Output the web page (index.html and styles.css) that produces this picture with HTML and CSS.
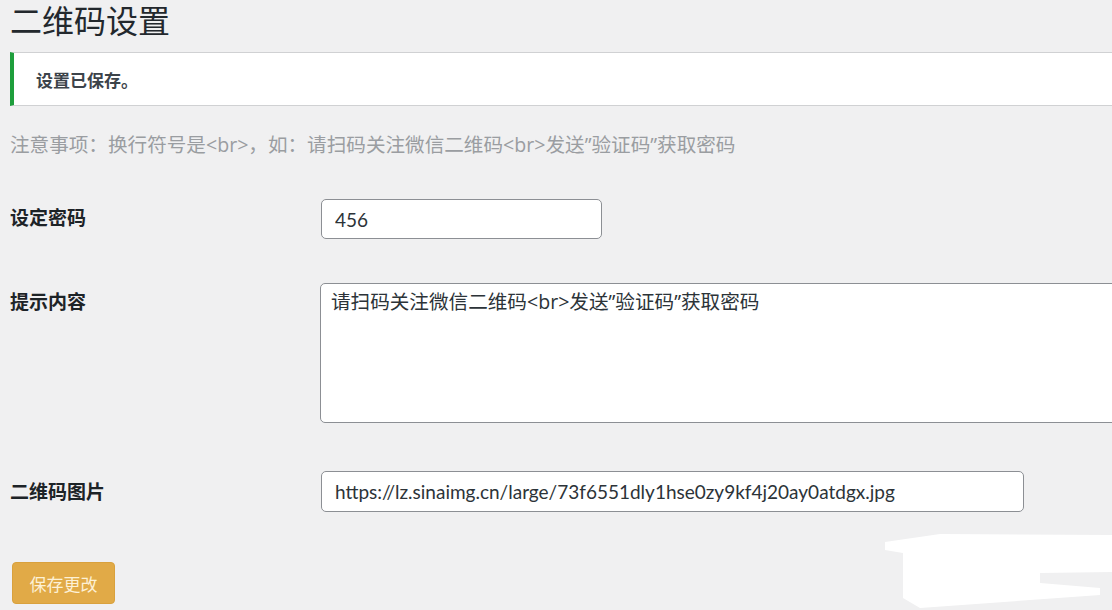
FILE: index.html
```html
<!DOCTYPE html>
<html lang="zh-CN">
<head>
<meta charset="utf-8">
<title>二维码设置</title>
<link rel="stylesheet" href="styles.css">
</head>
<body>
<div class="page">
  <h1 class="title">二维码设置</h1>
  <div class="notice"><p>设置已保存。</p></div>
  <p class="note">注意事项：换行符号是&lt;br&gt;，如：请扫码关注微信二维码&lt;br&gt;发送”验证码”获取密码</p>
  <form class="form">
    <div class="row row-pass">
      <label class="label" for="pass">设定密码</label>
      <div class="field"><input id="pass" class="input input-short" type="text" value="456"></div>
    </div>
    <div class="row row-tip">
      <label class="label" for="tip">提示内容</label>
      <div class="field"><textarea id="tip" class="textarea">请扫码关注微信二维码&lt;br&gt;发送”验证码”获取密码</textarea></div>
    </div>
    <div class="row row-img">
      <label class="label" for="img">二维码图片</label>
      <div class="field"><input id="img" class="input input-long" type="text" value="https://lz.sinaimg.cn/large/73f6551dly1hse0zy9kf4j20ay0atdgx.jpg"></div>
    </div>
    <div class="actions"><button type="button" class="button">保存更改</button></div>
  </form>
  <svg class="redact" width="252" height="90" viewBox="0 0 252 90" aria-hidden="true">
    <polygon points="25,22 80,14 252,15 252,52 180,53 180,63 240,68 240,75 60,88 43,78 43,33 25,30" fill="#ffffff"/>
  </svg>
</div>
</body>
</html>
```
FILE: styles.css
```css
html, body {
  margin: 0;
  padding: 0;
  background: #f0f0f1;
  overflow: hidden;
}
body {
  width: 1112px;
  height: 610px;
  font-family: "Open Sans", "Noto Sans CJK SC", sans-serif;
  color: #1d2327;
}
.page {
  position: relative;
  width: 1140px;
  height: 610px;
  padding-left: 10px;
  box-sizing: border-box;
}
.title {
  margin: 0;
  padding-top: 1px;
  font-size: 32px;
  line-height: 39px;
  font-weight: 400;
  color: #23282d;
}
.notice {
  margin-top: 12px;
  height: 54px;
  box-sizing: border-box;
  background: #fff;
  border: 1px solid #d0d1d3;
  border-left: 4px solid #1e9e3c;
  display: flex;
  align-items: center;
  padding-left: 22px;
}
.notice p {
  margin: 0;
  font-size: 17px;
  font-weight: 700;
  color: #3c434a;
}
.note {
  margin: 25px 0 0;
  font-size: 19.6px;
  line-height: 28px;
  color: #9a9da1;
}
.form {
  margin-top: 40px;
}
.row {
  display: grid;
  grid-template-columns: 311px 1fr;
  align-items: start;
}
.row-tip { margin-top: 44px; }
.row-img { margin-top: 48px; }
.label {
  padding-top: 6px;
  line-height: 26px;
  font-size: 19px;
  font-weight: 700;
  color: #1d2327;
}
.row-img .label { padding-top: 8px; }
.input {
  display: block;
  box-sizing: border-box;
  height: 40px;
  padding: 0 13px;
  font-family: "Lato", "Noto Sans CJK SC", sans-serif;
  font-size: 19px;
  color: #2c3338;
  background: #fff;
  border: 1px solid #8c8f94;
  border-radius: 5px;
  outline: none;
}
.input-short { width: 281px; }
.input-long { width: 703px; height: 41px; }
.textarea {
  display: block;
  box-sizing: border-box;
  margin-left: -1px;
  width: 830px;
  height: 140px;
  padding: 5px 10px;
  font-family: "Open Sans", "Noto Sans CJK SC", sans-serif;
  font-size: 19.6px;
  line-height: 26px;
  color: #2c3338;
  background: #fff;
  border: 1px solid #8c8f94;
  border-radius: 5px;
  resize: none;
  outline: none;
}
.actions {
  margin-top: 50px;
}
.button {
  margin-left: 2px;
  width: 103px;
  height: 42px;
  padding: 0;
  font-family: "Noto Sans CJK SC", sans-serif;
  font-size: 17px;
  color: #fdf1d6;
  background: #e1aa47;
  border: 1px solid #d9a13d;
  border-radius: 4px;
}
.redact {
  position: absolute;
  left: 860px;
  top: 520px;
}
```
